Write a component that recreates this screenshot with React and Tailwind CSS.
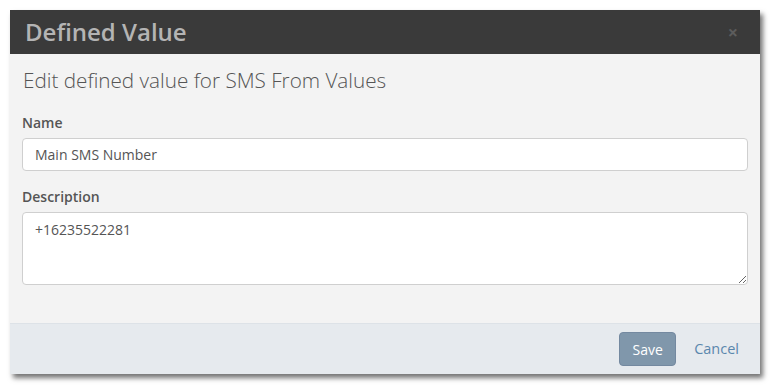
export default function App() {
  return (
    <div className="w-[771px] h-[385px] bg-white p-[10px]" style={{ fontFamily: '"Open Sans", sans-serif' }}>
      <div className="w-[750px] h-[364px] flex flex-col shadow-[3px_4px_5px_rgba(0,0,0,0.55)]">
        <div className="h-[44px] bg-[#3a3a3a] flex items-center justify-between pl-[15px] pr-[22px]">
          <h1 className="text-[24px] font-semibold text-[#b4b4b4] leading-none">Defined Value</h1>
          <span className="text-[#5c5c5c] text-[18px] font-bold leading-none">×</span>
        </div>
        <div className="flex-1 bg-[#f3f3f3] px-[12px] pt-[12px]">
          <h2 className="text-[20.7px] font-light text-[#555] leading-[28px] pl-[1px]">Edit defined value for SMS From Values</h2>
          <label className="block mt-[19px] text-[14px] font-semibold text-[#555] leading-[20px]">Name</label>
          <input
            className="mt-[5px] block w-full h-[33px] bg-white border border-[#cfcfcf] rounded-[4px] px-[12px] text-[14px] text-[#555] outline-none"
            defaultValue="Main SMS Number"
          />
          <label className="block mt-[16px] text-[14px] font-semibold text-[#555] leading-[20px]">Description</label>
          <textarea
            className="mt-[5px] block w-full h-[73px] bg-white border border-[#cfcfcf] rounded-[4px] px-[12px] pt-[6px] text-[14px] text-[#555] outline-none"
            defaultValue="+16235522281"
          />
        </div>
        <div className="h-[51px] bg-[#e6eaee] border-t border-[#dde2e7] flex items-center justify-end pr-[21px] gap-[18px]">
          <button className="w-[57px] h-[34px] rounded-[4px] bg-[#8097ab] border border-[#7489a0] text-white text-[14px]">Save</button>
          <button className="text-[#5b87ad] text-[14.5px]">Cancel</button>
        </div>
      </div>
    </div>
  );
}
